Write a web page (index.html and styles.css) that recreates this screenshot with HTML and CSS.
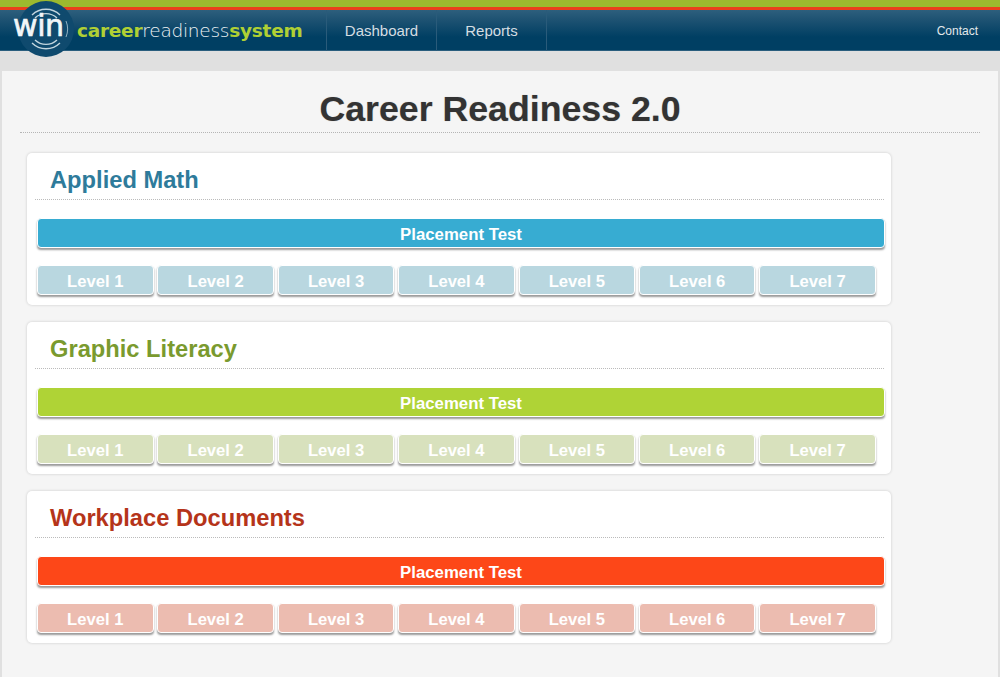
FILE: index.html
```html
<!DOCTYPE html>
<html lang="en">
<head>
<meta charset="utf-8">
<title>Career Readiness 2.0</title>
<link rel="stylesheet" href="styles.css">
</head>
<body>
<header class="topbar">
  <div class="logo-disc">
    <svg class="logo-arcs" width="56" height="56" viewBox="0 0 56 56" aria-hidden="true">
      <path d="M14 14 A20 20 0 0 1 42 14" class="arc"/>
      <path d="M17 17 A16 16 0 0 1 39 17" class="arc"/>
      <path d="M14 42 A20 20 0 0 0 42 42" class="arc"/>
      <path d="M17 39 A16 16 0 0 0 39 39" class="arc"/>
      <path d="M48 20 A21 21 0 0 1 48 36" class="arc arc-thin"/>
    </svg>
    <span class="logo-win">win</span>
  </div>
  <div class="brand"><b>career</b>readiness<b>system</b></div>
  <nav class="nav">
    <a class="nav-item">Dashboard</a>
    <a class="nav-item">Reports</a>
  </nav>
  <a class="contact">Contact</a>
</header>
<main class="panel">
  <h1 class="title">Career Readiness 2.0</h1>
  <section class="card math">
    <h2 class="card-title">Applied Math</h2>
    <a class="placement">Placement Test</a>
    <div class="levels">
      <a class="level">Level 1</a><a class="level">Level 2</a><a class="level">Level 3</a><a class="level">Level 4</a><a class="level">Level 5</a><a class="level">Level 6</a><a class="level">Level 7</a>
    </div>
  </section>
  <section class="card graphic">
    <h2 class="card-title">Graphic Literacy</h2>
    <a class="placement">Placement Test</a>
    <div class="levels">
      <a class="level">Level 1</a><a class="level">Level 2</a><a class="level">Level 3</a><a class="level">Level 4</a><a class="level">Level 5</a><a class="level">Level 6</a><a class="level">Level 7</a>
    </div>
  </section>
  <section class="card docs">
    <h2 class="card-title">Workplace Documents</h2>
    <a class="placement">Placement Test</a>
    <div class="levels">
      <a class="level">Level 1</a><a class="level">Level 2</a><a class="level">Level 3</a><a class="level">Level 4</a><a class="level">Level 5</a><a class="level">Level 6</a><a class="level">Level 7</a>
    </div>
  </section>
</main>
</body>
</html>
```
FILE: styles.css
```css
* { box-sizing: border-box; }
html, body { margin: 0; height: 677px; overflow: hidden; }
body {
  background: #e0e0e0;
  font-family: "Liberation Sans", Arial, sans-serif;
  color: #333;
}
.topbar {
  position: relative;
  height: 51px;
  display: flex;
  align-items: center;
  border-top: 7px solid #9cb92e;
  background: linear-gradient(#ea3f1c 3px, #2d5f7d 3px, #1f5373 12px, #003f63 30px, #003f63 100%);
  background-origin: padding-box;
  background-clip: padding-box;
  box-shadow: inset 0 -1px 0 #2a5e7e;
  padding-top: 3px;
}
.logo-disc {
  position: absolute;
  left: 18px;
  top: -6px;
  width: 56px;
  height: 56px;
  border-radius: 50%;
  background: #0f4a6e;
  display: flex;
  align-items: center;
  justify-content: center;
}
.logo-arcs { position: absolute; left: 0; top: 0; }
.arc { fill: none; stroke: #c3d6df; stroke-width: 1.4; }
.arc-thin { stroke-width: 1; stroke: #8fb0c1; }
.logo-win {
  position: absolute;
  left: -5px;
  top: 7px;
  color: #f2f6f8;
  font-family: "DejaVu Sans", sans-serif;
  font-size: 30px;
  line-height: 36px;
  letter-spacing: -0.4px;
  -webkit-text-stroke: 0.7px #f2f6f8;
}
.brand {
  margin-left: 77px;
  width: 249px;
  font-family: "DejaVu Sans", sans-serif;
  font-size: 18.5px;
  letter-spacing: -0.25px;
  color: #eef3f5;
  white-space: nowrap;
  font-weight: 300;
}
.brand b { color: #b0d034; font-weight: 700; }
.nav { display: flex; align-self: stretch; }
.nav-item {
  width: 110px;
  display: flex;
  align-items: center;
  justify-content: center;
  border-left: 1px solid #2a5b7a;
  color: #d5dde2;
  font-size: 15px;
}
.nav-item:last-child { border-right: 1px solid #2a5b7a; width: 111px; }
.contact {
  margin-left: auto;
  margin-right: 22px;
  color: #e3e8ea;
  font-size: 12px;
}
.panel {
  margin: 20px 2px 0;
  height: 606px;
  background: #f5f5f5;
  padding: 0 18px;
}
.title {
  margin: 0 0 20px;
  height: 62px;
  line-height: 76px;
  text-align: center;
  font-size: 35.7px;
  font-weight: 700;
  color: #333;
  border-bottom: 1px dotted #b5b5b5;
  text-shadow: 0 0 1px rgba(0,0,0,.3);
}
.card {
  width: 864px;
  margin: 0 0 17px 7px;
  height: 152px;
  padding: 0 7px 0 8px;
  background: #fff;
  border-radius: 5px;
  box-shadow: 0 0 3px rgba(0,0,0,.18);
}
.card-title {
  margin: 0 0 18px;
  height: 47px;
  padding-left: 15px;
  line-height: 54px;
  font-size: 23.7px;
  font-weight: 700;
  border-bottom: 1px dotted #bbb;
}
.placement, .level {
  display: block;
  height: 30px;
  line-height: 31px;
  text-align: center;
  color: #fff;
  font-weight: 700;
  border: 1px solid #fff;
  border-radius: 4px;
  box-shadow: 0 2px 2px rgba(0,0,0,.4);
}
.placement { margin: 0 -1px 0 2px; font-size: 16.8px; }
.levels {
  display: grid;
  grid-template-columns: repeat(7, 116.5px);
  column-gap: 3.9px;
  margin: 17px 0 0 2px;
}
.level { font-size: 16.6px; }
.math .card-title { color: #2e7b9b; }
.math .placement { background: #37acd2; }
.math .level { background: #b9d7e0; }
.graphic .card-title { color: #7a9a2e; }
.graphic .placement { background: #afd336; }
.graphic .level { background: #d8e1bd; }
.docs .card-title { color: #b5341a; }
.docs .placement { background: #fd4718; }
.docs .level { background: #ecbcb0; }
```
